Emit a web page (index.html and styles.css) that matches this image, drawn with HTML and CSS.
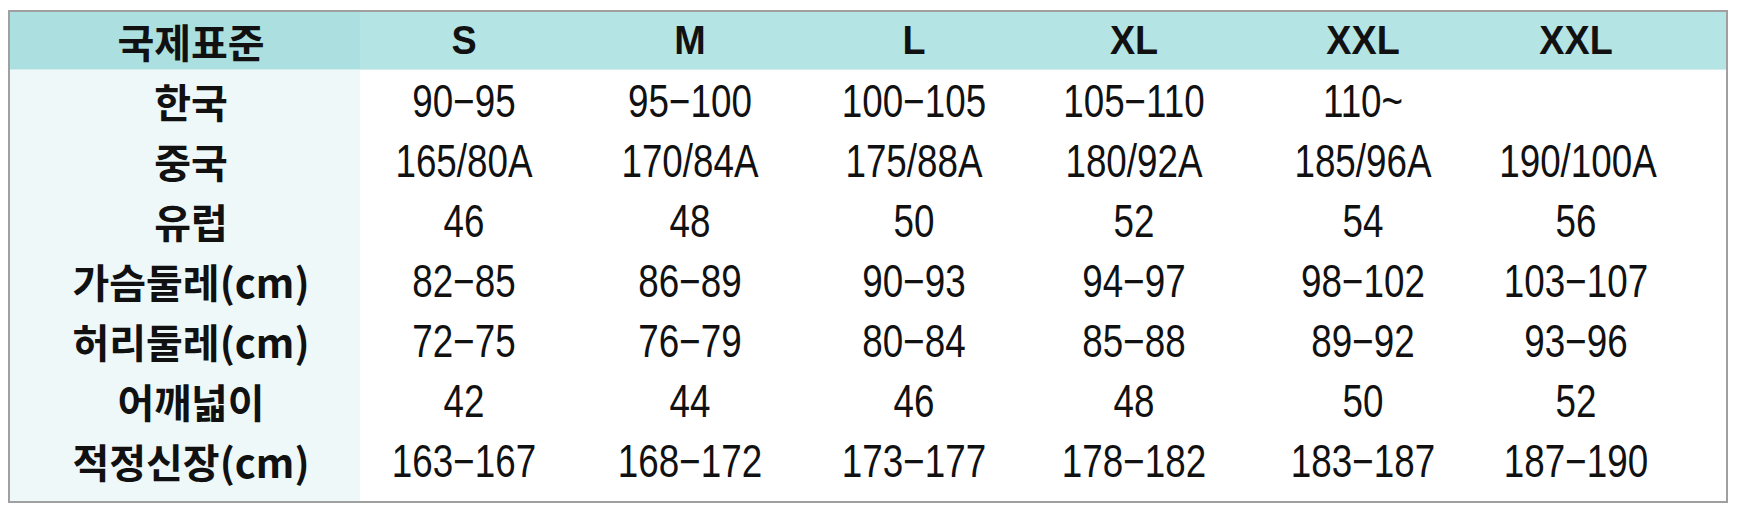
FILE: index.html
```html
<!DOCTYPE html>
<html>
<head>
    <meta charset="utf-8">
    <link rel="stylesheet" href="styles.css">
</head>
<body>
<div class="chart">
    <div class="chart-head">
        <div class="row">
            <div class="label">국제표준</div>
            <div class="cell c1">S</div>
            <div class="cell c2">M</div>
            <div class="cell c3">L</div>
            <div class="cell c4">XL</div>
            <div class="cell c5">XXL</div>
            <div class="cell c6">XXL</div>
        </div>
    </div>

    <div class="chart-body">
        <div class="row">
            <div class="label">한국</div>
            <div class="cell c1">90−95</div>
            <div class="cell c2">95−100</div>
            <div class="cell c3">100−105</div>
            <div class="cell c4">105−110</div>
            <div class="cell c5">110~</div>
            <div class="cell c6"></div>
        </div>
        <div class="row">
            <div class="label">중국</div>
            <div class="cell c1">165/80A</div>
            <div class="cell c2">170/84A</div>
            <div class="cell c3">175/88A</div>
            <div class="cell c4">180/92A</div>
            <div class="cell c5">185/96A</div>
            <div class="cell c6">190/100A</div>
        </div>
        <div class="row">
            <div class="label">유럽</div>
            <div class="cell c1">46</div>
            <div class="cell c2">48</div>
            <div class="cell c3">50</div>
            <div class="cell c4">52</div>
            <div class="cell c5">54</div>
            <div class="cell c6">56</div>
        </div>
        <div class="row">
            <div class="label">가슴둘레(cm)</div>
            <div class="cell c1">82−85</div>
            <div class="cell c2">86−89</div>
            <div class="cell c3">90−93</div>
            <div class="cell c4">94−97</div>
            <div class="cell c5">98−102</div>
            <div class="cell c6">103−107</div>
        </div>
        <div class="row">
            <div class="label">허리둘레(cm)</div>
            <div class="cell c1">72−75</div>
            <div class="cell c2">76−79</div>
            <div class="cell c3">80−84</div>
            <div class="cell c4">85−88</div>
            <div class="cell c5">89−92</div>
            <div class="cell c6">93−96</div>
        </div>
        <div class="row">
            <div class="label">어깨넓이</div>
            <div class="cell c1">42</div>
            <div class="cell c2">44</div>
            <div class="cell c3">46</div>
            <div class="cell c4">48</div>
            <div class="cell c5">50</div>
            <div class="cell c6">52</div>
        </div>
        <div class="row">
            <div class="label">적정신장(cm)</div>
            <div class="cell c1">163−167</div>
            <div class="cell c2">168−172</div>
            <div class="cell c3">173−177</div>
            <div class="cell c4">178−182</div>
            <div class="cell c5">183−187</div>
            <div class="cell c6">187−190</div>
        </div>
    </div>
</div>
</body>
</html>
```

FILE: styles.css
```css
body {
    margin: 0;
    background: #fff;
    color: #111;
}
.chart {
    width: 1720px;
    margin: 10px 0 0 8px;
    border: 2px solid #a0a0a0;
    box-sizing: border-box;
}
.row {
    display: flex;
    align-items: center;
}

/* header band */
.chart-head {
    height: 57px;
    border-bottom: 1px solid #d4eeee;
    background: linear-gradient(to right, #acdfdf 350px, #b4e4e4 350px);
}
.chart-head .row {
    height: 57px;
}
.chart-head .cell {
    font-family: "Liberation Sans", Arial, sans-serif;
    font-weight: bold;
    font-size: 41px;
    transform: scaleX(0.92);
}

/* body rows */
.chart-body {
    padding: 1px 0 10px;
    background: linear-gradient(to right, #eef8f9 350px, #fff 350px);
}
.chart-body .row {
    height: 60px;
}
.chart-body .cell {
    font-family: "Liberation Sans", Arial, sans-serif;
    font-size: 46px;
    /* numbers in the chart are set in a narrow face */
    transform: scaleX(0.8);
}

.label {
    width: 344px;
    padding-left: 18px;
    box-sizing: border-box;
    text-align: center;
    font-family: "Noto Sans CJK KR", sans-serif;
    font-weight: bold;
    font-size: 40px;
    line-height: 1;
}
.cell {
    text-align: center;
    line-height: 1;
}
.c1 { width: 220px; }
.c2 { width: 232px; }
.c3 { width: 216px; }
.c4 { width: 224px; }
.c5 { width: 234px; }
.c6 { width: 192px; }
```
